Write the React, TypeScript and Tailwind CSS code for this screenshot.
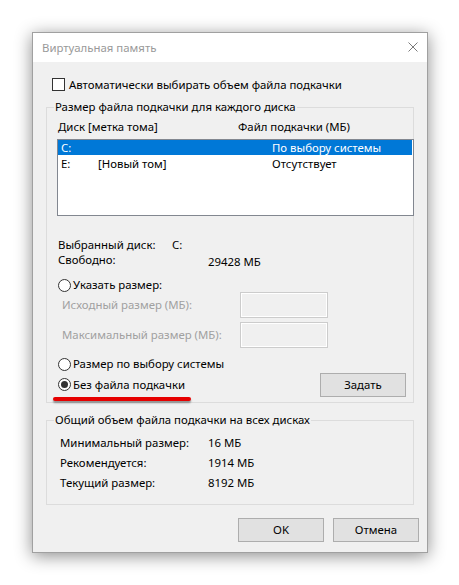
function Radio({ checked }: { checked?: boolean }) {
  return (
    <span className="flex h-[13px] w-[13px] shrink-0 items-center justify-center rounded-full border border-[#333333] bg-white">
      {checked && <span className="h-[7px] w-[7px] rounded-full bg-[#333333]" />}
    </span>
  );
}

function WinButton({ label, className }: { label: string; className?: string }) {
  return (
    <button
      className={
        'flex h-[24px] w-[86px] items-center justify-center border border-[#adadad] bg-[#e1e1e1] text-black ' +
        (className ?? '')
      }
    >
      {label}
    </button>
  );
}

export default function App() {
  return (
    <div className="min-h-[585px] w-[459px] bg-white pl-[32px] pt-[32px] font-['Noto_Sans',sans-serif] text-[11.4px] leading-[16px] text-black">
      <div className="flex h-[521px] w-[396px] flex-col border border-[#a0a0a0] bg-[#f0f0f0] shadow-[0_3px_16px_rgba(0,0,0,0.45)]">
        {/* title bar */}
        <div className="flex h-[29px] shrink-0 items-center justify-between bg-white pl-[9px] pr-[9px]">
          <span className="text-[#999999]">Виртуальная память</span>
          <svg width="10" height="10" viewBox="0 0 10 10" className="-mt-[2px]">
            <path d="M0.5 0.5 L9.5 9.5 M9.5 0.5 L0.5 9.5" stroke="#7a7a7a" strokeWidth="1" fill="none" />
          </svg>
        </div>

        <div className="flex flex-1 flex-col">
          <div className="ml-[19px] mt-[16px] flex h-[13px] items-center gap-[4px]">
            <span className="h-[13px] w-[13px] shrink-0 border border-[#333333] bg-white" />
            <span>Автоматически выбирать объем файла подкачки</span>
          </div>

          {/* per-disk group */}
          <div className="ml-[13px] mt-[16px] flex w-[368px] flex-col border border-[#dcdcdc] pb-[1px] pl-[10px]">
            <span className="-ml-[3px] -mt-[9px] w-fit bg-[#f0f0f0] px-[1px] leading-[16px]">
              Размер файла подкачки для каждого диска
            </span>
            <div className="mt-[4px] flex">
              <span className="w-[181px] pl-[1px]">Диск [метка тома]</span>
              <span>Файл подкачки (МБ)</span>
            </div>
            <div className="mt-[4px] flex h-[77px] w-[357px] flex-col border border-[#828790] bg-white">
              <div className="mr-[1px] flex h-[15px] items-center bg-[#0078d7] text-white">
                <span className="w-[40px] pl-[3px]">C:</span>
                <span className="w-[174px]"></span>
                <span>По выбору системы</span>
              </div>
              <div className="mt-[1px] flex h-[15px] items-center">
                <span className="w-[40px] pl-[3px]">E:</span>
                <span className="w-[174px]">[Новый том]</span>
                <span>Отсутствует</span>
              </div>
            </div>

            <div className="mt-[21px] flex h-[15px] items-center leading-[15px]">
              <span className="w-[115px] pl-[1px]">Выбранный диск:</span>
              <span>C:</span>
            </div>
            <div className="flex h-[15px] items-start leading-[15px]">
              <span className="w-[151px] pl-[1px]">Свободно:</span>
              <span className="mt-[2px]">29428 МБ</span>
            </div>

            <div className="mt-[11px] flex h-[14px] items-center gap-[2px] pl-[1px]">
              <Radio />
              <span>Указать размер:</span>
            </div>
            <div className="flex items-center">
              <span className="w-[183px] pl-[5px] text-[#a0a0a0]">Исходный размер (МБ):</span>
              <div className="h-[26px] w-[88px] border border-[#cccccc] shadow-[inset_0_0_0_1px_#ffffff]" />
            </div>
            <div className="mt-[4px] flex items-center">
              <span className="w-[183px] pl-[5px] text-[#a0a0a0]">Максимальный размер (МБ):</span>
              <div className="h-[26px] w-[88px] border border-[#cccccc] shadow-[inset_0_0_0_1px_#ffffff]" />
            </div>

            <div className="mt-[9px] flex h-[14px] items-center gap-[2px] pl-[1px]">
              <Radio />
              <span>Размер по выбору системы</span>
            </div>
            <div className="mt-[2px] flex h-[23px] items-center justify-between pr-[7px]">
              <div className="flex items-center gap-[2px] pl-[1px]">
                <Radio checked />
                <span>Без файла подкачки</span>
              </div>
              <WinButton label="Задать" className="h-[23px]" />
            </div>
            <div className="-ml-[4px] mt-[1px] h-[4px] w-[138px] rounded-full bg-[#e60000] shadow-[0_2px_2px_rgba(0,0,0,0.4)]" />
          </div>

          {/* totals group */}
          <div className="ml-[13px] mt-[17px] flex w-[368px] flex-col border border-[#dcdcdc] pb-[11px] pl-[10px]">
            <span className="-ml-[3px] -mt-[9px] w-fit bg-[#f0f0f0] px-[1px] leading-[16px]">
              Общий объем файла подкачки на всех дисках
            </span>
            <div className="mt-[5px] flex flex-col leading-[20px]">
              <div className="flex">
                <span className="w-[151px] pl-[3px]">Минимальный размер:</span>
                <span>16 МБ</span>
              </div>
              <div className="flex">
                <span className="w-[151px] pl-[3px]">Рекомендуется:</span>
                <span>1914 МБ</span>
              </div>
              <div className="flex">
                <span className="w-[151px] pl-[3px]">Текущий размер:</span>
                <span>8192 МБ</span>
              </div>
            </div>
          </div>

          <div className="mt-[13px] flex justify-end gap-[9px] pr-[8px]">
            <WinButton label="OK" />
            <WinButton label="Отмена" />
          </div>
        </div>
      </div>
    </div>
  );
}
